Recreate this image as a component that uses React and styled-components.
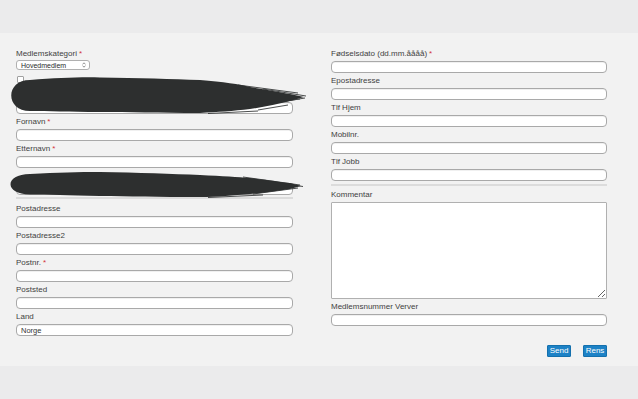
import React from "react";
import styled, { createGlobalStyle } from "styled-components";

const GlobalStyle = createGlobalStyle`
  html, body { margin: 0; padding: 0; }
  body {
    background: #ececec;
    font-family: "Liberation Sans", Arial, sans-serif;
  }
  * { box-sizing: border-box; }
`;

const Page = styled.div`
  width: 638px;
  height: 399px;
  display: flex;
  flex-direction: column;
  overflow: hidden;
`;

const Band = styled.div`
  height: ${(p) => p.$h}px;
  background: #ebebec;
  flex: ${(p) => (p.$grow ? 1 : "none")};
`;

const Main = styled.form`
  height: 333px;
  background: #f2f2f2;
  padding: 13px 0 0 16px;
  display: flex;
  gap: 38px;
`;

const Column = styled.div`
  position: relative;
  width: ${(p) => p.$w}px;
  display: flex;
  flex-direction: column;
`;

const Field = styled.div`
  display: flex;
  flex-direction: column;
  padding-top: 3px;
  gap: ${(p) => (p.$gap != null ? p.$gap : 2)}px;
`;

const Label = styled.label`
  display: block;
  height: 10px;
  line-height: 10px;
  font-size: 8px;
  color: #3f3f3f;
  white-space: nowrap;
`;

const Req = styled.span`
  color: #d2323a;
  margin-left: 2px;
`;

const Input = styled.input`
  width: 100%;
  height: 12px;
  border: 1px solid #a9a9a9;
  border-radius: 4px;
  background: #fff;
  padding: 0 4px;
  font-family: "Liberation Sans", Arial, sans-serif;
  font-size: 7.5px;
  color: #333;
  outline: none;
  box-shadow: inset 0 1px 0 rgba(0, 0, 0, 0.06);
`;

const TextArea = styled.textarea`
  display: block;
  width: 100%;
  height: 97px;
  border: 1px solid #b0b0b0;
  border-radius: 1px;
  background: #fff;
  outline: none;
  resize: both;
  margin: 0;
`;

const SelectBox = styled.div`
  width: 74px;
  height: 10px;
  border: 1px solid #b0b0b0;
  border-radius: 3px;
  background: #fff;
  display: flex;
  align-items: center;
  justify-content: space-between;
  padding: 0 3px 0 4px;
  font-size: 7px;
  color: #2a2a2a;
`;

const CheckRow = styled.div`
  height: 17px;
  display: flex;
  align-items: center;
  padding-left: 1px;
`;

const CheckBox = styled.span`
  display: inline-block;
  width: 7px;
  height: 7px;
  border: 1px solid #a0a0a0;
  border-radius: 1px;
  background: #fff;
  margin-top: 2px;
`;

const Rule = styled.div`
  height: 2px;
  background: #dcdcdc;
  margin: ${(p) => p.$m};
`;

const ButtonRow = styled.div`
  margin-top: 19px;
  display: flex;
  justify-content: flex-end;
  gap: 12px;
`;

const Button = styled.button`
  width: 24px;
  height: 12px;
  padding: 0;
  border: 1px solid #1470ad;
  border-radius: 1px;
  background: #1d82c6;
  color: #fff;
  font-family: "Liberation Sans", Arial, sans-serif;
  font-size: 8px;
  line-height: 10px;
`;

const Blot = styled.svg`
  position: absolute;
  left: ${(p) => p.$x}px;
  top: ${(p) => p.$y}px;
  pointer-events: none;
`;

const InkA = () => (
  <Blot $x={-8} $y={30} width="298" height="40" viewBox="0 0 298 40">
    <path
      fill="#2d2f2f"
      d="M22 4 C50 2 70 1 92 1.5 C130 2 165 3 192 4 C215 6 232 8 242 11 C260 14 272 16 282 18 L296 21 L282 25 C270 28 256 31 242 33 C225 35 210 36 192 37 C150 37 120 36 92 36 C60 36 40 35 22 35 C-3 35 -3 4 22 4 Z"
    />
    <g stroke="#2d2f2f" strokeWidth="1" fill="none" opacity="0.85">
      <path d="M230 9 L290 17" />
      <path d="M240 30 L292 23" />
      <path d="M250 34 L280 29" />
      <path d="M200 37.5 L250 35" />
      <path d="M255 13 L298 20" />
      <path d="M260 28 L297 22" />
    </g>
  </Blot>
);

const InkB = () => (
  <Blot $x={-8} $y={125} width="296" height="28" viewBox="0 0 296 28">
    <path
      fill="#2d2f2f"
      d="M22 3 C50 1.5 70 1 92 1 C130 1.5 165 3 192 4 C215 5 230 6 242 7 C260 9 272 11 282 12 L293 15 L282 18 C270 20 256 22 242 23 C225 24.5 210 26 192 26 C150 26 120 25.5 92 25 C60 24.5 40 23.5 22 23.5 C-4 23.5 -4 3 22 3 Z"
    />
    <g stroke="#2d2f2f" strokeWidth="1" fill="none" opacity="0.85">
      <path d="M235 6 L292 14" />
      <path d="M245 23 L290 17" />
      <path d="M200 26.5 L255 24" />
      <path d="M258 10 L295 15.5" />
    </g>
  </Blot>
);

const Arrows = () => (
  <svg width="4" height="6" viewBox="0 0 4 6">
    <path d="M0.5 2.4 L2 0.8 L3.5 2.4 M0.5 3.6 L2 5.2 L3.5 3.6" stroke="#666" strokeWidth="0.7" fill="none" />
  </svg>
);

const TextField = ({ label, required, value }) => (
  <Field>
    <Label>
      {label}
      {required && <Req>*</Req>}
    </Label>
    <Input defaultValue={value} />
  </Field>
);

export default function App() {
  return (
    <>
      <GlobalStyle />
      <Page>
        <Band $h={33} />
        <Main onSubmit={(e) => e.preventDefault()}>
          <Column $w={277}>
            <Field $gap={1}>
              <Label>
                Medlemskategori<Req>*</Req>
              </Label>
              <SelectBox>
                <span>Hovedmedlem</span>
                <Arrows />
              </SelectBox>
            </Field>
            <CheckRow>
              <CheckBox />
            </CheckRow>
            <Field>
              <Label />
              <Input />
            </Field>
            <TextField label="Fornavn" required />
            <TextField label="Etternavn" required />
            <Field>
              <Label />
              <Input />
            </Field>
            <Rule $m="2px 0 2px" />
            <TextField label="Postadresse" />
            <TextField label="Postadresse2" />
            <TextField label="Postnr." required />
            <TextField label="Poststed" />
            <TextField label="Land" value="Norge" />
            <InkA />
            <InkB />
          </Column>
          <Column $w={276}>
            <TextField label="Fødselsdato (dd.mm.åååå)" required />
            <TextField label="Epostadresse" />
            <TextField label="Tlf Hjem" />
            <TextField label="Mobilnr." />
            <TextField label="Tlf Jobb" />
            <Rule $m="3px 0 1px" />
            <Field>
              <Label>Kommentar</Label>
              <TextArea />
            </Field>
            <TextField label="Medlemsnummer Verver" />
            <ButtonRow>
              <Button type="submit">Send</Button>
              <Button type="reset">Rens</Button>
            </ButtonRow>
          </Column>
        </Main>
        <Band $grow />
      </Page>
    </>
  );
}
